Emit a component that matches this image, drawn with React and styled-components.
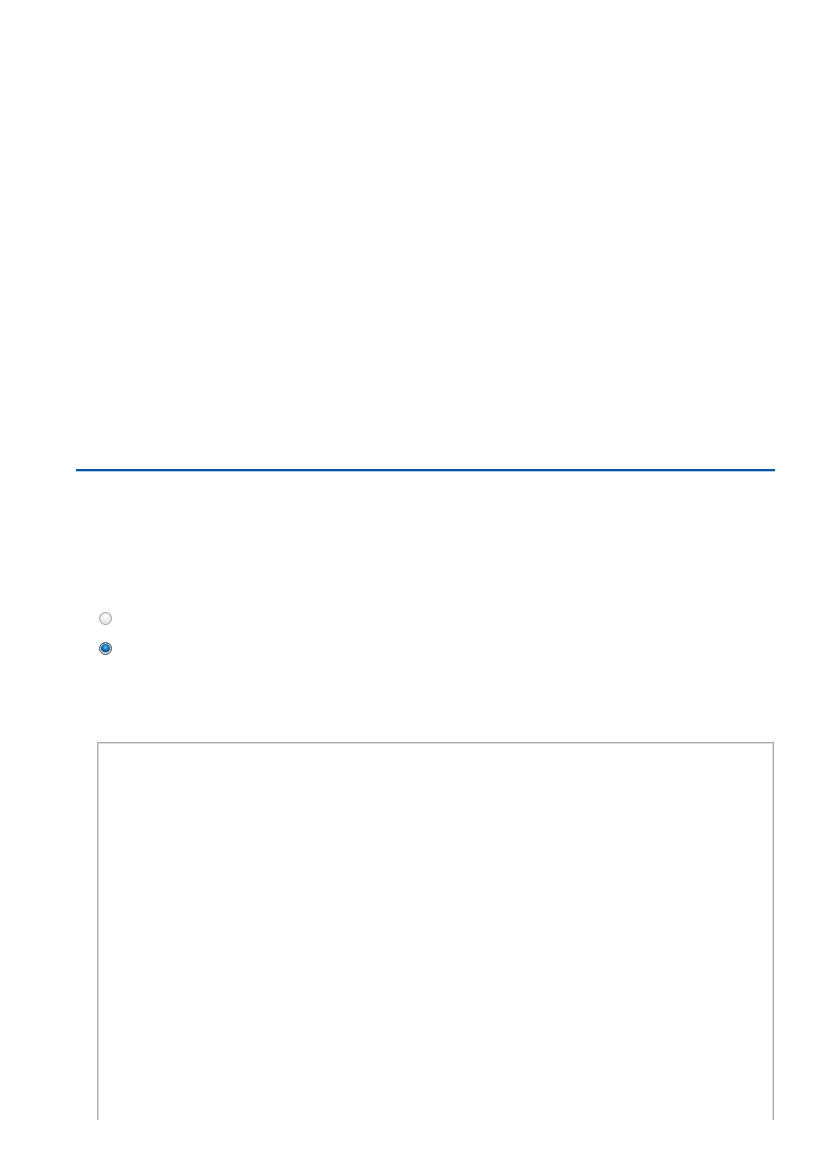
import React from "react";
import styled, { createGlobalStyle } from "styled-components";

const Global = createGlobalStyle`
  html, body {
    margin: 0;
    padding: 0;
    background: #ffffff;
    font-family: "Liberation Sans", Arial, sans-serif;
  }
`;

const Page = styled.div`
  width: 699px;
  padding: 469px 0 0 76px;
  box-sizing: content-box;
`;

const Rule = styled.div`
  height: 2px;
  background: #0452ad;
  border-bottom: 1px solid #b3cbe6;
`;

const Options = styled.div`
  display: flex;
  flex-direction: column;
  gap: 17px;
  margin-top: 140px;
  padding-left: 23px;
`;

const Option = styled.label`
  display: flex;
  align-items: center;
  gap: 8px;
  height: 13px;
  font-size: 13px;
  color: #ffffff;
`;

const Radio = styled.span`
  width: 11px;
  height: 11px;
  border-radius: 50%;
  flex: none;
  border: 1px solid ${(p) => (p.$checked ? "#2f4b63" : "#9c9c9c")};
  background: ${(p) =>
    p.$checked
      ? "radial-gradient(circle at 50% 40%, #6cc2f5 0, #1a82d2 26%, #0b5a9c 44%, #27445c 52%, #b9c4cd 60%, #e8ecef 100%)"
      : "radial-gradient(circle at 50% 35%, #ffffff 0, #f0f0f0 40%, #cfcfcf 100%)"};
  box-shadow: inset 0 0 0 1px ${(p) => (p.$checked ? "#d3dbe2" : "#ececec")};
`;

const Frame = styled.div`
  margin: 87px 0 0 21px;
  width: 677px;
  height: 378px;
  box-sizing: border-box;
  border: 1px solid #a8a8a8;
  border-bottom: none;
  box-shadow: inset 1px 1px 0 #e0e0e0, inset -1px 0 0 #e0e0e0;
  background: #ffffff;
`;

export default function App() {
  return (
    <>
      <Global />
      <Page>
        <Rule />
        <Options>
          <Option>
            <Radio />
          </Option>
          <Option>
            <Radio $checked />
          </Option>
        </Options>
        <Frame />
      </Page>
    </>
  );
}
